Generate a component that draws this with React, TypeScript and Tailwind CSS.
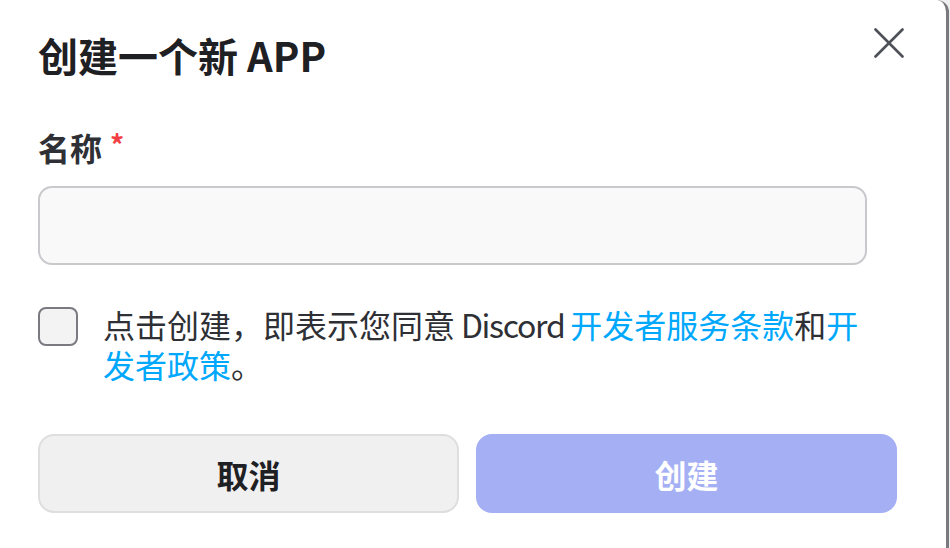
import React from "react";

export default function App() {
  const font = { fontFamily: '"Noto Sans CJK SC", "Noto Sans", sans-serif' };
  return (
    <div className="w-[950px] h-[548px] bg-[#efefef] flex overflow-hidden" style={font}>
      <div className="relative w-[949px] h-full bg-white border-r-[3px] border-[#7a7a7e] rounded-tr-[12px] pl-[38px] pt-[31px] flex flex-col">
        <h1 className="text-[40px] leading-[48px] font-bold text-[#1f2023]">创建一个新 APP</h1>
        <button className="absolute top-[28px] right-[42px] w-[30px] h-[30px] flex items-center justify-center" aria-label="关闭">
          <svg width="30" height="30" viewBox="0 0 30 30" fill="none" stroke="#4e5058" strokeWidth="2.6" strokeLinecap="round">
            <path d="M1.5 1.5 L28.5 28.5 M28.5 1.5 L1.5 28.5" />
          </svg>
        </button>

        <label className="mt-[48px] text-[32px] leading-[40px] font-semibold text-[#2e3035] flex items-start">
          名称
          <span className="ml-[8px] text-[#f23f43] text-[28px] leading-[34px]">*</span>
        </label>

        <input
          className="mt-[19px] w-[829px] h-[79px] rounded-[14px] border-2 border-[#c9c9cd] bg-[#f9f9f9] outline-none"
          type="text"
        />

        <div className="mt-[39px] flex items-start">
          <div className="mt-[3px] w-[40px] h-[39px] shrink-0 rounded-[8px] border-2 border-[#7a7a80] bg-[#f3f3f4]" />
          <p className="ml-[25px] w-[770px] text-[32px] leading-[40px] text-[#2e3035]">
            点击创建，即表示您同意<span className="tracking-[-1.3px]"> Discord </span><span className="text-[#00a8fc]">开发者服务条款</span>和<span className="text-[#00a8fc]">开发者政策</span>。
          </p>
        </div>

        <div className="mt-[50px] flex gap-[17px]">
          <button className="w-[421px] h-[79px] rounded-[16px] border-2 border-[#dedede] bg-[#f0f0f0] text-[32px] font-bold text-[#1f2023]">
            取消
          </button>
          <button className="w-[421px] h-[79px] rounded-[16px] bg-[#a4aff4] text-[32px] font-bold text-white">
            创建
          </button>
        </div>
      </div>
    </div>
  );
}
